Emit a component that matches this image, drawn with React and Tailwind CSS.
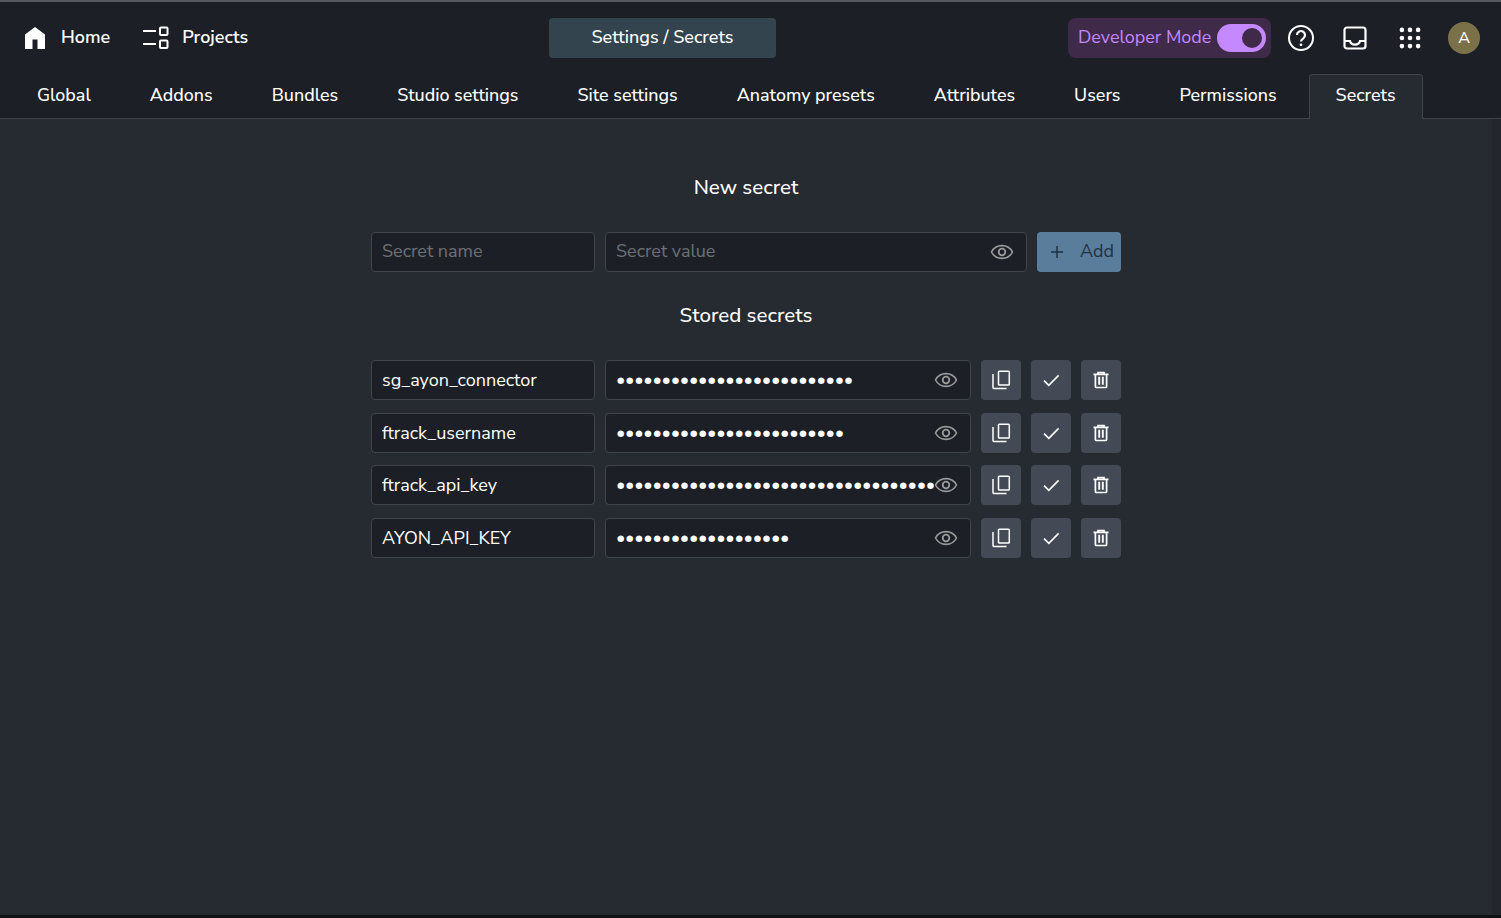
const tabs = ["Global","Addons","Bundles","Studio settings","Site settings","Anatomy presets","Attributes","Users","Permissions","Secrets"];
const rows = [["sg_ayon_connector",26],["ftrack_username",25],["ftrack_api_key",48],["AYON_API_KEY",19]];

function Eye() {
  return (
    <svg width="24" height="24" viewBox="0 0 24 24" fill="none" stroke="#9a9a9a" strokeWidth="1.6" className="shrink-0">
      <path d="M1.5 12C3.6 8 7.4 5.6 12 5.6S20.4 8 22.5 12c-2.100 4-5.900 6.400-10.500 6.400S3.600 16 1.500 12z" />
      <circle cx="12" cy="12" r="3.300" strokeWidth="1.800" />
    </svg>
  );
}
function Copy() {
  return (
    <svg width="20" height="20" viewBox="0 0 20 20" fill="none" stroke="#fff" strokeWidth="1.500">
      <rect x="7.500" y="1.200" width="10.800" height="13.800" rx=".8" />
      <path d="M2 4v13.500a1 1 0 0 0 1 1h12.500" />
    </svg>
  );
}
function Check() {
  return (
    <svg width="18" height="18" viewBox="0 0 18 18" fill="none" stroke="#fff" strokeWidth="1.600">
      <path d="M2 9.600l4.800 4.700L16.600 4.400" />
    </svg>
  );
}
function Trash() {
  return (
    <svg width="18" height="18" viewBox="0 0 18 18" fill="none" stroke="#fff" strokeWidth="1.700">
      <path d="M1.500 3.300h15M6 3V1.500h6V3" />
      <path d="M3.400 3.300v12.200a1 1 0 0 0 1 1h9.200a1 1 0 0 0 1-1V3.300" />
      <path d="M7.200 5.800v8M10.800 5.800v8" strokeWidth="1.900" />
    </svg>
  );
}
function IconBtn({ children }) {
  return <button className="w-10 h-10 shrink-0 rounded-[4px] bg-[#434a56] flex items-center justify-center">{children}</button>;
}
function Field({ className, ...props }) {
  return (
    <input
      {...props}
      readOnly
      className={"h-10 rounded-[4px] border border-[#3f444d] bg-[#1c2026] px-[10px] text-[18px] text-white outline-none placeholder:text-[#6d7077] " + (className || "")}
    />
  );
}

export default function App() {
  return (
    <div className="h-[918px] overflow-hidden flex flex-col bg-[#262a31] text-white font-['Nunito_Sans','Noto_Sans',sans-serif]">
      <div className="h-[2px] shrink-0 bg-[#55585c]" />
      <header className="h-[72px] shrink-0 bg-[#1c2026] relative flex items-center justify-between pl-6 pr-[21px]">
        <div className="flex items-center font-semibold text-[18px]">
          <svg width="22" height="24" viewBox="0 0 22 24" fill="#fff" className="mr-[15px]">
            <path d="M11 1 1 8.500V23h7.500v-9.500h5V23H21V8.500z" />
          </svg>
          <span className="mr-[32px] pb-[2px]">Home</span>
          <svg width="28" height="24" viewBox="0 0 28 24" fill="none" stroke="#fff" className="mr-[12px]">
            <path d="M1 5h13M1 18h13" strokeWidth="2" />
            <rect x="18" y="1.500" width="7.500" height="7.500" rx="1" strokeWidth="2" />
            <rect x="18" y="14.500" width="7.500" height="7.500" rx="1" strokeWidth="2" />
          </svg>
          <span className="pb-[2px]">Projects</span>
        </div>
        <div className="absolute left-[549px] top-[16px] w-[227px] h-10 rounded-[4px] bg-[#33444f] pb-[2px] flex items-center justify-center font-medium text-[18px]">
          Settings / Secrets
        </div>
        <div className="flex items-center">
          <div className="w-[203px] h-10 rounded-lg bg-[#3f2a4a] flex items-center justify-between pl-[10px] pr-[5px] text-[18px] text-[#c488ff] mr-[15px]">
            <span className="pb-[2px]">Developer Mode</span>
            <span className="w-[49px] h-7 rounded-full bg-[#c488ff] flex items-center justify-end pr-1">
              <span className="w-5 h-5 rounded-full bg-[#3f2a4a]" />
            </span>
          </div>
          <svg width="30" height="30" viewBox="0 0 30 30" fill="none" stroke="#fff" strokeWidth="2" className="mr-[26px]">
            <circle cx="15" cy="15" r="12" />
            <path d="M11 12a4 4 0 1 1 6.300 3.300c-1.500 1-2.300 1.800-2.300 3.200" strokeWidth="2.200" />
            <circle cx="15" cy="21.800" r="1.400" fill="#fff" stroke="none" />
          </svg>
          <svg width="26" height="26" viewBox="0 0 26 26" fill="none" stroke="#fff" strokeWidth="2.200" className="mr-[30px]">
            <rect x="2.500" y="2.500" width="21" height="21" rx="2.500" />
            <path d="M2.500 16h5.500c.6 2.600 2.600 3.600 5 3.600s4.400-1 5-3.600h5.500" />
          </svg>
          <svg width="24" height="24" viewBox="0 0 24 24" fill="#fff" className="mr-[26px]">
            {[3.900,12,20.100].flatMap(y => [3.900,12,20.100].map(x => <circle key={x+"-"+y} cx={x} cy={y} r="2.300" />))}
          </svg>
          <div className="w-8 h-8 rounded-full bg-[#7b7148] flex items-center justify-center text-[16px] font-medium">A</div>
        </div>
      </header>
      <nav className="h-[45px] shrink-0 bg-[#1c2026] border-b border-[#3f444d] flex gap-[5px] pl-[10px]">
        {tabs.map(t => (
          <div
            key={t}
            className={"h-[45px] px-[26px] pb-[3px] flex items-center text-[17.900px] font-medium rounded-t-[4px] border border-b-0 " +
              (t === "Secrets" ? "bg-[#262a31] border-[#3f444d]" : "border-transparent")}
          >
            {t}
          </div>
        ))}
      </nav>
      <div className="flex-1 min-h-0 flex">
        <main className="flex-1 flex flex-col items-center pt-[56px]">
          <div className="w-[750px] flex flex-col items-stretch">
            <h2 className="h-6 flex items-center justify-center text-[20.500px] font-medium">New secret</h2>
            <div className="flex gap-[10px] mt-[33px]">
              <Field placeholder="Secret name" className="w-[224px] pb-[2px]" />
              <div className="relative w-[422px]">
                <Field placeholder="Secret value" className="w-full pb-[2px]" />
                <div className="absolute right-[13px] top-2"><Eye /></div>
              </div>
              <button className="w-[84px] h-10 rounded-[4px] bg-[#5a7d9c] flex items-center pl-[10px] pb-[1px] gap-[13px] text-[#1e3244] text-[18px]">
                <svg width="20" height="20" viewBox="0 0 20 20" stroke="#1e3244" strokeWidth="1.500"><path d="M10 4v12M4 10h12" /></svg>
                Add
              </button>
            </div>
            <h2 className="h-6 flex items-center justify-center text-[20.500px] font-medium mt-[31px]">Stored secrets</h2>
            <div className="flex flex-col gap-[12.500px] mt-[33px]">
              {rows.map(([name, n]) => (
                <div key={name} className="flex gap-[10px]">
                  <Field value={name} className="w-[224px]" />
                  <div className="relative w-[366px]">
                    <Field type="password" value={"x".repeat(n)} className="w-full pr-[34px] tracking-[-0.32px]" />
                    <div className="absolute right-[13px] top-2"><Eye /></div>
                  </div>
                  <IconBtn><Copy /></IconBtn>
                  <IconBtn><Check /></IconBtn>
                  <IconBtn><Trash /></IconBtn>
                </div>
              ))}
            </div>
          </div>
        </main>
        <div className="w-[9px] shrink-0 bg-[#23272d]" />
      </div>
      <div className="h-[3px] shrink-0 bg-[#0f1113]" />
    </div>
  );
}
